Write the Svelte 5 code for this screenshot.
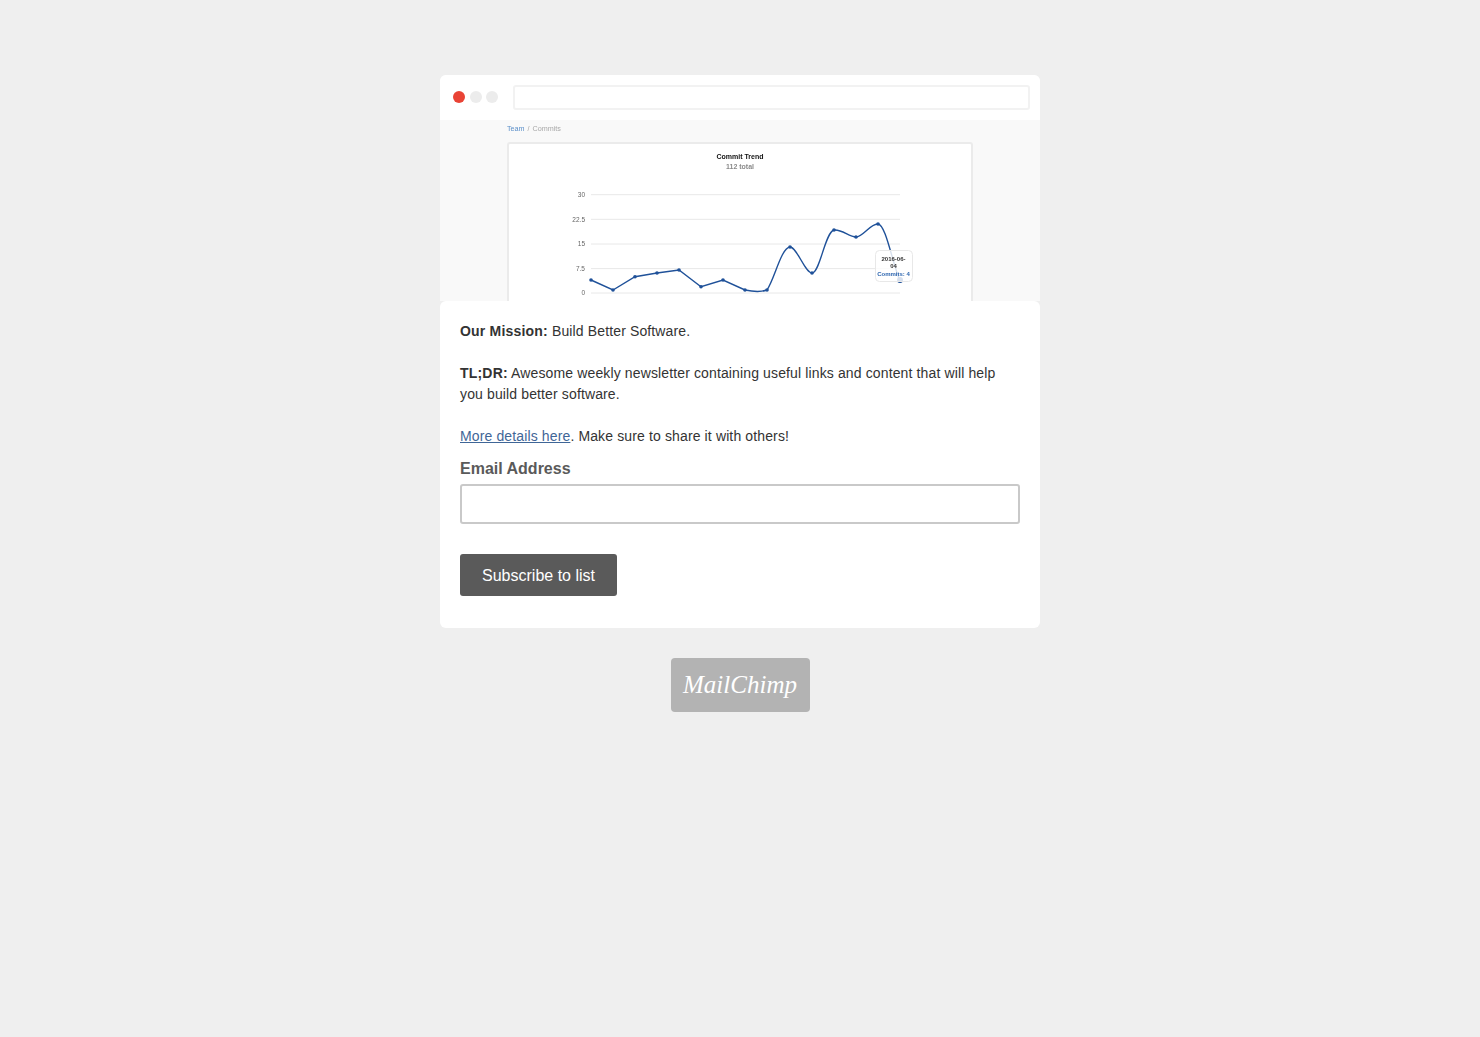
<script>
  const gridLines = [
    { label: '30', y: 194.7 },
    { label: '22.5', y: 219.3 },
    { label: '15', y: 244 },
    { label: '7.5', y: 268.6 },
    { label: '0', y: 293 }
  ];
  const points = [
    [591, 280], [613, 290], [635, 276.7], [657, 273], [679, 270], [701, 286.7], [723, 280],
    [745, 290], [767, 290], [790, 247], [812, 273], [834, 230], [856, 237], [878, 224], [900, 281]
  ];
  const trend =
    'M591 280 L613 290 L635 276.7 L657 273 L679 270 L701 286.7 L723 280 L745 290 ' +
    'C752 291.5 760 292.5 767 290 C775 278 781 248 790 247 C797 247 805 273 812 273 ' +
    'C820 273 825 232 834 230 C842 229 849 237 856 237 C863 237 871 223 878 224 C886 225 892 262 900 281';
</script>

<div class="page">
  <div class="hero">
    <div class="chrome">
      <span class="dot red"></span>
      <span class="dot"></span>
      <span class="dot"></span>
      <div class="urlbar"></div>
    </div>
    <div class="shot">
      <div class="crumbs"><span class="team">Team</span> <i>/</i> Commits</div>
      <div class="panel">
        <svg class="chart" viewBox="509 144 462 157" width="462" height="157">
          <text x="740" y="159" text-anchor="middle" class="title">Commit Trend</text>
          <text x="740" y="169" text-anchor="middle" class="sub">112 total</text>
          {#each gridLines as g}
            <line x1="591" x2="900" y1={g.y} y2={g.y} class="grid" />
            <text x="585" y={g.y + 2.2} text-anchor="end" class="tick">{g.label}</text>
          {/each}
          <path d={trend} class="line" />
          {#each points as p}
            <circle cx={p[0]} cy={p[1]} r="1.8" class="pt" />
          {/each}
          <circle cx="900" cy="280" r="3" class="pt" />
          <rect x="875.5" y="250.5" width="37" height="31" rx="4" class="tip" />
          <text x="893.5" y="260.5" text-anchor="middle" class="tip-date">2016-06-</text>
          <text x="893.5" y="267.5" text-anchor="middle" class="tip-date">04</text>
          <text x="893.5" y="275.5" text-anchor="middle" class="tip-val">Commits: 4</text>
        </svg>
      </div>
    </div>
  </div>

  <form class="card" onsubmit={(e) => e.preventDefault()}>
    <p><strong>Our Mission:</strong> Build Better Software.</p>
    <p><strong>TL;DR:</strong> Awesome weekly newsletter containing useful links and content that will help you build better software.</p>
    <p class="last"><a href="#details">More details here</a>. Make sure to share it with others!</p>
    <label for="email">Email Address</label>
    <input id="email" type="email" />
    <button type="submit">Subscribe to list</button>
  </form>

  <div class="badge"><span>MailChimp</span></div>
</div>

<style>
  :global(body) {
    background: #efefef;
    font-family: "Liberation Sans", Arial, sans-serif;
  }
  .page {
    width: 600px;
    margin: 0 auto;
    padding-top: 75px;
    min-height: 962px;
  }

  .hero {
    height: 226px;
    overflow: hidden;
    border-radius: 6px 6px 0 0;
    background: #f9f9f9;
  }
  .chrome {
    height: 45px;
    background: #fff;
    display: flex;
    align-items: center;
    gap: 4.5px;
    padding: 0 10px 1px 13px;
    box-sizing: border-box;
  }
  .dot {
    width: 12px;
    height: 12px;
    border-radius: 50%;
    background: #ececec;
  }
  .dot.red { background: #e94335; }
  .urlbar {
    flex: 1;
    height: 25px;
    margin-left: 10.5px;
    box-sizing: border-box;
    border: 2px solid #f2f2f2;
    border-radius: 3px;
  }
  .shot {
    padding-left: 67px;
    filter: blur(0.35px);
  }
  .crumbs {
    height: 22px;
    font-size: 7.2px;
    line-height: 18px;
    color: #a8a8a8;
  }
  .crumbs .team { color: #5b8fc9; }
  .crumbs i { font-style: normal; margin: 0 1px; }
  .panel {
    width: 466px;
    height: 170px;
    box-sizing: border-box;
    border: 2px solid #ebebeb;
    border-radius: 3px 3px 0 0;
    background: #fff;
  }
  .chart { display: block; }
  .chart text { font-family: "Liberation Sans", Arial, sans-serif; }
  .title { font-size: 7px; font-weight: 700; fill: #111; }
  .sub { font-size: 7px; fill: #8a8a8a; font-weight: 700; }
  .tick { font-size: 6.5px; fill: #666; }
  .grid { stroke: #e8e8e8; stroke-width: 1; }
  .line { fill: none; stroke: #1f5199; stroke-width: 1.4; }
  .pt { fill: #1f5199; }
  .tip { fill: rgba(255, 255, 255, 0.82); stroke: #e8e8e8; stroke-width: 1; }
  .tip-date { font-size: 6px; font-weight: 700; fill: #333; }
  .tip-val { font-size: 6px; fill: #2f67b0; font-weight: 700; }

  .card {
    background: #fff;
    border-radius: 6px;
    padding: 20px 20px 32px;
    color: #333;
    font-size: 14px;
    line-height: 21px;
    letter-spacing: 0.13px;
  }
  .card strong { letter-spacing: 0.2px; }
  .card p { margin: 0 0 21px; }
  .card p.last { margin-bottom: 12px; }
  .card a { color: #3f6697; }
  label {
    display: block;
    color: #5a5a5a;
    font-size: 16px;
    font-weight: 700;
    line-height: 20px;
    letter-spacing: 0;
    margin-bottom: 5px;
  }
  input {
    display: block;
    width: 100%;
    height: 40px;
    box-sizing: border-box;
    border: 2px solid #c9c9c9;
    border-radius: 3px;
    background: #fff;
  }
  button {
    display: block;
    margin-top: 30px;
    width: 157px;
    height: 42px;
    padding: 1px 0 0;
    border: 0;
    border-radius: 3px;
    background: #5a5a5a;
    color: #fff;
    font-family: inherit;
    font-size: 16px;
  }

  .badge {
    width: 139px;
    height: 54px;
    margin: 30px auto 0;
    border-radius: 4px;
    background: #b3b3b3;
    color: #fff;
    display: flex;
    align-items: center;
    justify-content: center;
  }
  .badge span {
    font-family: "Liberation Serif", serif;
    font-style: italic;
    font-size: 25px;
  }
</style>
